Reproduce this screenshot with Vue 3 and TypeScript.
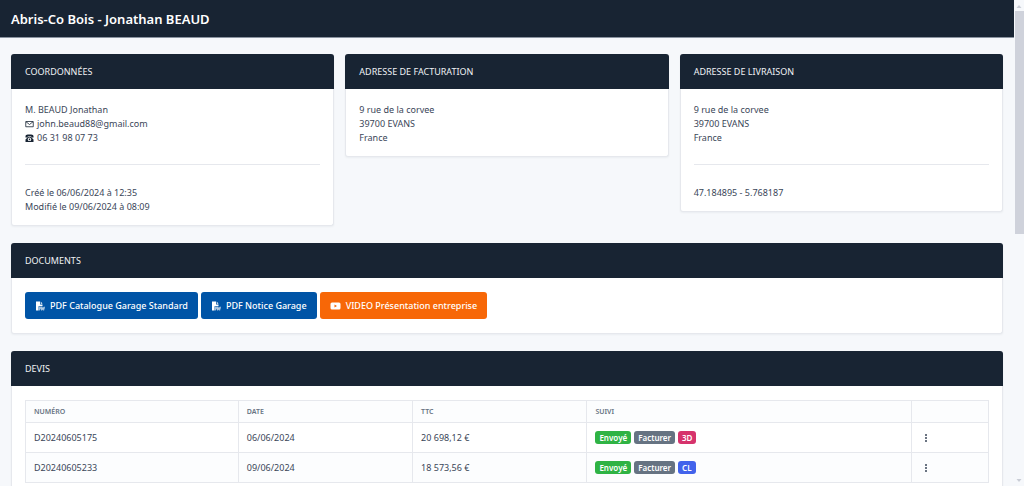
<script setup lang="ts">
interface Tag {
  label: string
  tone: string
}
interface Quote {
  id: string
  date: string
  total: string
  tags: Tag[]
}

const sent: Tag = { label: 'Envoyé', tone: 'green' }
const invoice: Tag = { label: 'Facturer', tone: 'slate' }

const address: string[] = ['9 rue de la corvee', '39700 EVANS', 'France']
const quotes: Quote[] = [
  { id: 'D20240605175', date: '06/06/2024', total: '20 698,12 €', tags: [sent, invoice, { label: '3D', tone: 'pink' }] },
  { id: 'D20240605233', date: '09/06/2024', total: '18 573,56 €', tags: [sent, invoice, { label: 'CL', tone: 'indigo' }] },
]
const pdfs: string[] = ['PDF Catalogue Garage Standard', 'PDF Notice Garage']
</script>

<template>
  <div class="shell">
    <div class="page">
      <header class="topbar">
        <h1>Abris-Co Bois - Jonathan BEAUD</h1>
      </header>
      <main class="content">
        <div class="grid">
          <section class="card">
            <h2>Coordonnées</h2>
            <div class="body">
              <p>M. BEAUD Jonathan</p>
              <p>
                <a href="mailto:john.beaud88@gmail.com">
                  <svg class="glyph" viewBox="0 0 18 18" aria-hidden="true">
                    <path d="M1.5 3h15v10.500h-15zM2 3.500l7 5.500 7-5.500" fill="none" stroke="currentColor" stroke-width="1.600" />
                  </svg>
                  <span>john.beaud88@gmail.com</span>
                </a>
              </p>
              <p>
                <a href="tel:0631980773">
                  <svg class="glyph" viewBox="0 0 18 18" aria-hidden="true">
                    <path d="M1 7V4.500C1 2.500 3 1 5.500 1h7C15 1 17 2.500 17 4.500V7h-4.500V4.500h-7V7z" fill="currentColor" />
                    <path fill-rule="evenodd" d="M6.500 5.500h5L17 11v5H1v-5zM9 7a3.500 3.500 0 1 0 .01 0zM9 9a1.500 1.500 0 1 1-.01 0z" fill="currentColor" />
                  </svg>
                  <span>06 31 98 07 73</span>
                </a>
              </p>
              <hr />
              <p>Créé le 06/06/2024 à 12:35</p>
              <p>Modifié le 09/06/2024 à 08:09</p>
            </div>
          </section>
          <section class="card">
            <h2>Adresse de facturation</h2>
            <div class="body">
              <p v-for="line in address" :key="line">{{ line }}</p>
            </div>
          </section>
          <section class="card">
            <h2>Adresse de livraison</h2>
            <div class="body">
              <p v-for="line in address" :key="line">{{ line }}</p>
              <hr />
              <p>47.184895 - 5.768187</p>
            </div>
          </section>
        </div>

        <section class="card">
          <h2>Documents</h2>
          <div class="body buttons">
            <button v-for="pdf in pdfs" :key="pdf" type="button" class="btn blue">
              <svg viewBox="0 0 20 20" aria-hidden="true">
                <path d="M2 1h8v6h5v3.500H7V19H2z" fill="currentColor" />
                <path d="M11.500 1l3.500 4.500h-3.500z" fill="currentColor" />
                <path d="M8.500 19v-6.500h1.500a1.500 1.500 0 0 1 0 3.500H8.500M12.800 18.300v-5.800h.7a1.500 1.500 0 0 1 1.500 1.500v2.800a1.500 1.500 0 0 1-1.500 1.500zM17.300 19v-6.500H20M17.300 15.500h2.200" fill="none" stroke="currentColor" stroke-width="1.400" />
              </svg>
              {{ pdf }}
            </button>
            <button type="button" class="btn orange">
              <svg class="video" viewBox="0 0 22 18" aria-hidden="true">
                <path fill-rule="evenodd" d="M4 2h14a3 3 0 0 1 3 3v8a3 3 0 0 1-3 3H4a3 3 0 0 1-3-3V5a3 3 0 0 1 3-3zM9 6v6l5-3z" fill="currentColor" />
              </svg>
              VIDEO Présentation entreprise
            </button>
          </div>
        </section>

        <section class="card">
          <h2>Devis</h2>
          <div class="body">
            <table>
              <colgroup>
                <col class="c-num" />
                <col class="c-mid" />
                <col class="c-mid" />
                <col />
                <col class="c-act" />
              </colgroup>
              <thead>
                <tr>
                  <th scope="col">Numéro</th>
                  <th scope="col">Date</th>
                  <th scope="col">TTC</th>
                  <th scope="col">Suivi</th>
                  <td></td>
                </tr>
              </thead>
              <tbody>
                <tr v-for="quote in quotes" :key="quote.id">
                  <td>{{ quote.id }}</td>
                  <td>{{ quote.date }}</td>
                  <td>{{ quote.total }}</td>
                  <td>
                    <div class="tags">
                      <span v-for="tag in quote.tags" :key="tag.label" class="tag" :class="tag.tone">{{ tag.label }}</span>
                    </div>
                  </td>
                  <td>
                    <button type="button" class="more" :aria-label="`Actions ${quote.id}`">
                      <svg viewBox="0 0 4 10" aria-hidden="true">
                        <circle cx="2" cy="2" r="1" />
                        <circle cx="2" cy="5" r="1" />
                        <circle cx="2" cy="8" r="1" />
                      </svg>
                    </button>
                  </td>
                </tr>
              </tbody>
            </table>
          </div>
        </section>
      </main>
    </div>
    <div class="scroll" aria-hidden="true">
      <svg viewBox="0 0 10 11"><path d="M5 5l2.500 3h-5z" /></svg>
      <div class="track"><div class="thumb"></div></div>
      <svg viewBox="0 0 10 11"><path d="M5 7l2.500-3h-5z" /></svg>
    </div>
  </div>
</template>

<style>
body {
  background: #f6f8fb;
}
</style>

<style scoped>
* {
  box-sizing: border-box;
}
.shell {
  display: flex;
  height: 100vh;
  overflow: hidden;
  background: #f6f8fb;
  color: #3a4658;
  font: 9px/14px "Noto Sans", "Open Sans", sans-serif;
}
.page {
  flex: 1;
  min-width: 0;
}
.topbar {
  padding: 10px 11px 9px;
  background: #182433;
  border-bottom: 1px solid #8a93a0;
}
h1 {
  margin: 0;
  color: #fff;
  font-size: 13px;
  line-height: 18px;
  font-weight: 600;
}
.content {
  display: flex;
  flex-direction: column;
  gap: 17px;
  padding: 16px 11px;
}
.grid {
  display: grid;
  grid-template-columns: repeat(3, 1fr);
  gap: 11px;
  align-items: start;
}
.card {
  background: #fff;
  border: 1px solid #e6e8ed;
  border-top: 0;
  border-radius: 3px;
  box-shadow: 0 1px 2px rgba(24, 36, 51, 0.05);
}
h2 {
  margin: 0 -1px;
  padding: 11px 14px;
  background: #182433;
  border-radius: 3px 3px 0 0;
  color: #f0f2f5;
  font-size: 9px;
  line-height: 13px;
  font-weight: 400;
  text-transform: uppercase;
}
.body {
  padding: 14px 13px 11px;
}
p {
  margin: 0;
}
hr {
  height: 1px;
  margin: 19px 0 21px;
  border: 0;
  background: #e6e8ed;
}
a {
  display: flex;
  align-items: center;
  gap: 3px;
  color: inherit;
  text-decoration: none;
}
.glyph {
  width: 9px;
  height: 9px;
  color: #182433;
}
.buttons {
  display: flex;
  gap: 3px;
  padding-bottom: 14px;
}
.btn {
  display: flex;
  align-items: center;
  gap: 5px;
  padding: 7px 10px 6px;
  border: 0;
  border-radius: 3px;
  color: #fff;
  font: 500 9px/14px "Noto Sans", "Open Sans", sans-serif;
}
.btn svg {
  width: 10px;
  height: 10px;
}
.btn .video {
  width: 11px;
}
.blue {
  background: #0054a6;
}
.orange {
  background: #f76707;
}
table {
  width: 100%;
  table-layout: fixed;
  border-collapse: collapse;
}
.c-num {
  width: 22.1%;
}
.c-mid {
  width: 18.1%;
}
.c-act {
  width: 8%;
}
th,
td {
  height: 30px;
  padding: 0 8px;
  border: 1px solid #e6e8ed;
  text-align: left;
}
thead th,
thead td {
  height: 22px;
  background: #fcfdfe;
  color: #667382;
  font-size: 7px;
  line-height: 11px;
  font-weight: 600;
  text-transform: uppercase;
}
tbody tr:nth-child(even) {
  background: #fcfdfe;
}
.tags {
  display: flex;
  gap: 3px;
}
.tag {
  padding: 0 4px;
  border-radius: 3px;
  color: #fff;
  font-size: 8px;
  line-height: 13px;
  font-weight: 600;
}
.green {
  background: #2fb344;
}
.slate {
  background: #667382;
}
.pink {
  background: #d6336c;
}
.indigo {
  background: #4263eb;
}
.more {
  display: flex;
  padding: 2px 4px;
  border: 0;
  background: none;
}
.more svg {
  width: 4px;
  height: 10px;
  fill: #3a4658;
}
.scroll {
  display: flex;
  flex-direction: column;
  width: 10px;
  background: #f6f8fb;
}
.scroll svg {
  width: 10px;
  height: 11px;
  fill: #c9cdd6;
}
.track {
  flex: 1;
  padding-left: 1px;
}
.thumb {
  height: 48%;
  background: #cfd2db;
}
</style>
